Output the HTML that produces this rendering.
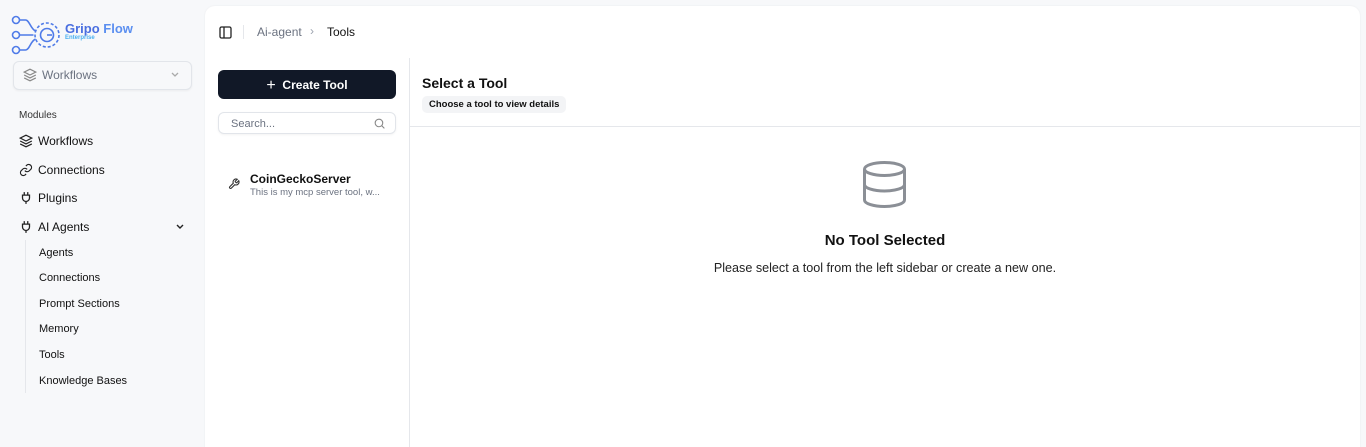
<!DOCTYPE html>
<html><head><meta charset="utf-8"><style>
*{box-sizing:border-box;margin:0;padding:0}
html,body{width:1366px;height:447px;overflow:hidden}
body{background:#f7f8fa;font-family:"Liberation Sans",sans-serif;color:#111827;position:relative}
.abs{position:absolute}
.nav{font-size:12px;color:#111}
.sub{font-size:11px;color:#111}
svg{display:block}
</style></head><body>
<svg class="abs" style="left:11px;top:15px" width="50" height="40" viewBox="0 0 50 40" fill="none" stroke="#4f7be8" stroke-width="1.6">
<circle cx="5" cy="5" r="3.5"/><circle cx="5" cy="20" r="3.5"/><circle cx="5" cy="35" r="3.5"/>
<path d="M8.5 5h6c4 0 5 9 10 11M8.5 20h14M8.5 35h6c4 0 5-9 10-11"/>
<circle cx="36" cy="20" r="12" stroke-dasharray="3 2"/><circle cx="36" cy="20" r="6.5"/><path d="M36 20h5"/>
</svg>
<div class="abs" style="left:65px;top:21px;font-size:13px;font-weight:bold;color:#4a6fe0">Gripo <span style="color:#5b8ff0">Flow</span></div>
<div class="abs" style="left:65px;top:35px;font-size:6px;font-weight:bold;color:#4ab0f0">Enterprise</div>
<div class="abs" style="left:13px;top:61px;width:179px;height:29px;border:1px solid #e2e5ea;border-radius:6px;background:#f7f8fa;box-shadow:0 1px 2px rgba(0,0,0,.05)"></div>
<svg class="abs" style="left:23px;top:68px" width="14" height="14" viewBox="0 0 24 24" fill="none" stroke="#888" stroke-width="2"><path d="M12 2 2 7l10 5 10-5-10-5zM2 12l10 5 10-5M2 17l10 5 10-5"/></svg>
<div class="abs" style="left:42px;top:68px;font-size:12px;color:#6b7280">Workflows</div>
<svg class="abs" style="left:170px;top:71px" width="10" height="8" viewBox="0 0 10 8" fill="none" stroke="#aaa" stroke-width="1.3"><path d="M2 2l3 3 3-3"/></svg>
<div class="abs" style="left:19px;top:110px;font-size:10px;color:#333">Modules</div>
<svg class="abs" style="left:19px;top:134px" width="14" height="14" viewBox="0 0 24 24" fill="none" stroke="#222" stroke-width="2"><path d="M12 2 2 7l10 5 10-5-10-5zM2 12l10 5 10-5M2 17l10 5 10-5"/></svg>
<div class="abs nav" style="left:38px;top:134px">Workflows</div>
<svg class="abs" style="left:19px;top:163px" width="14" height="14" viewBox="0 0 24 24" fill="none" stroke="#222" stroke-width="2"><path d="M10 13a5 5 0 0 0 7.5.5l3-3a5 5 0 0 0-7-7l-1.7 1.7M14 11a5 5 0 0 0-7.5-.5l-3 3a5 5 0 0 0 7 7l1.7-1.7"/></svg>
<div class="abs nav" style="left:38px;top:163px">Connections</div>
<svg class="abs" style="left:19px;top:191px" width="14" height="14" viewBox="0 0 24 24" fill="none" stroke="#222" stroke-width="2.2"><path d="M9 2v5M15 2v5M6 7h12v5a6 6 0 0 1-12 0zM12 18v4"/></svg>
<div class="abs nav" style="left:38px;top:191px">Plugins</div>
<svg class="abs" style="left:19px;top:220px" width="14" height="14" viewBox="0 0 24 24" fill="none" stroke="#222" stroke-width="2.2"><path d="M9 2v5M15 2v5M6 7h12v5a6 6 0 0 1-12 0zM12 18v4"/></svg>
<div class="abs nav" style="left:38px;top:220px">AI Agents</div>
<svg class="abs" style="left:175px;top:223px" width="10" height="8" viewBox="0 0 10 8" fill="none" stroke="#222" stroke-width="1.4"><path d="M2 2l3 3 3-3"/></svg>
<div class="abs" style="left:25px;top:240px;width:1px;height:153px;background:#e5e7eb"></div>
<div class="abs sub" style="left:39px;top:247px">Agents</div>
<div class="abs sub" style="left:39px;top:272px">Connections</div>
<div class="abs sub" style="left:39px;top:298px">Prompt Sections</div>
<div class="abs sub" style="left:39px;top:323px">Memory</div>
<div class="abs sub" style="left:39px;top:349px">Tools</div>
<div class="abs sub" style="left:39px;top:375px">Knowledge Bases</div>
<div class="abs" style="left:205px;top:6px;width:1155px;height:460px;background:#fff;border-radius:10px;box-shadow:0 0 2px rgba(0,0,0,.06)"></div>
<svg class="abs" style="left:219px;top:26px" width="13" height="13" viewBox="0 0 13 13" fill="none" stroke="#222" stroke-width="1.3"><rect x="1" y="1" width="11" height="11" rx="1.5"/><path d="M5 1v11"/></svg>
<div class="abs" style="left:243px;top:25px;width:1px;height:14px;background:#e5e7eb"></div>
<div class="abs" style="left:257px;top:25px;font-size:12px;color:#6b7280">Ai-agent</div>
<div class="abs" style="left:310px;top:24px;font-size:12px;color:#9ca3af">›</div>
<div class="abs" style="left:327px;top:25px;font-size:12px;color:#111">Tools</div>
<div class="abs" style="left:409px;top:58px;width:1px;height:389px;background:#e5e7eb"></div>
<div class="abs" style="left:410px;top:126px;width:950px;height:1px;background:#e5e7eb"></div>
<div class="abs" style="left:218px;top:70px;width:178px;height:29px;background:#111827;border-radius:6px;color:#fff;font-size:12px;font-weight:bold;text-align:center;line-height:30px"><span style="font-weight:normal;font-size:16px;vertical-align:-1px">+</span>&nbsp; Create Tool</div>
<div class="abs" style="left:218px;top:112px;width:178px;height:22px;border:1px solid #e2e5ea;border-radius:6px;box-shadow:0 1px 2px rgba(0,0,0,.05)"></div>
<div class="abs" style="left:231px;top:118px;font-size:11px;color:#6b7280">Search...</div>
<svg class="abs" style="left:373px;top:117px" width="13" height="13" viewBox="0 0 24 24" fill="none" stroke="#888" stroke-width="2"><circle cx="11" cy="11" r="7"/><path d="m21 21-5-5"/></svg>
<svg class="abs" style="left:228px;top:178px" width="12" height="12" viewBox="0 0 24 24" fill="none" stroke="#333" stroke-width="2.2"><path d="M14.7 6.3a1 1 0 0 0 0 1.4l1.6 1.6a1 1 0 0 0 1.4 0l3.8-3.8a6 6 0 0 1-7.9 7.9l-6.9 6.9a2.1 2.1 0 0 1-3-3l6.9-6.9a6 6 0 0 1 7.9-7.9z"/></svg>
<div class="abs" style="left:250px;top:172px;font-size:12px;font-weight:bold;color:#111">CoinGeckoServer</div>
<div class="abs" style="left:250px;top:187px;font-size:9.5px;color:#6b7280">This is my mcp server tool, w...</div>
<div class="abs" style="left:422px;top:75px;font-size:14px;font-weight:bold;color:#111">Select a Tool</div>
<div class="abs" style="left:422px;top:96px;height:17px;padding:0 7px;background:#f3f4f6;border-radius:5px;font-size:9.5px;font-weight:bold;line-height:17px;color:#111">Choose a tool to view details</div>
<svg class="abs" style="left:862px;top:160px" width="45" height="49" viewBox="0 0 45 49" fill="none" stroke="#8b8f96" stroke-width="3"><ellipse cx="22.5" cy="9" rx="20" ry="6.5"/><path d="M2.5 9v31c0 3.6 9 6.5 20 6.5s20-2.9 20-6.5V9M2.5 24.5c0 3.6 9 6.5 20 6.5s20-2.9 20-6.5"/></svg>
<div class="abs" style="left:410px;top:232px;width:950px;text-align:center;font-size:15px;font-weight:bold;color:#111">No Tool Selected</div>
<div class="abs" style="left:410px;top:261px;width:950px;text-align:center;font-size:12.6px;color:#222">Please select a tool from the left sidebar or create a new one.</div>
</body></html>
